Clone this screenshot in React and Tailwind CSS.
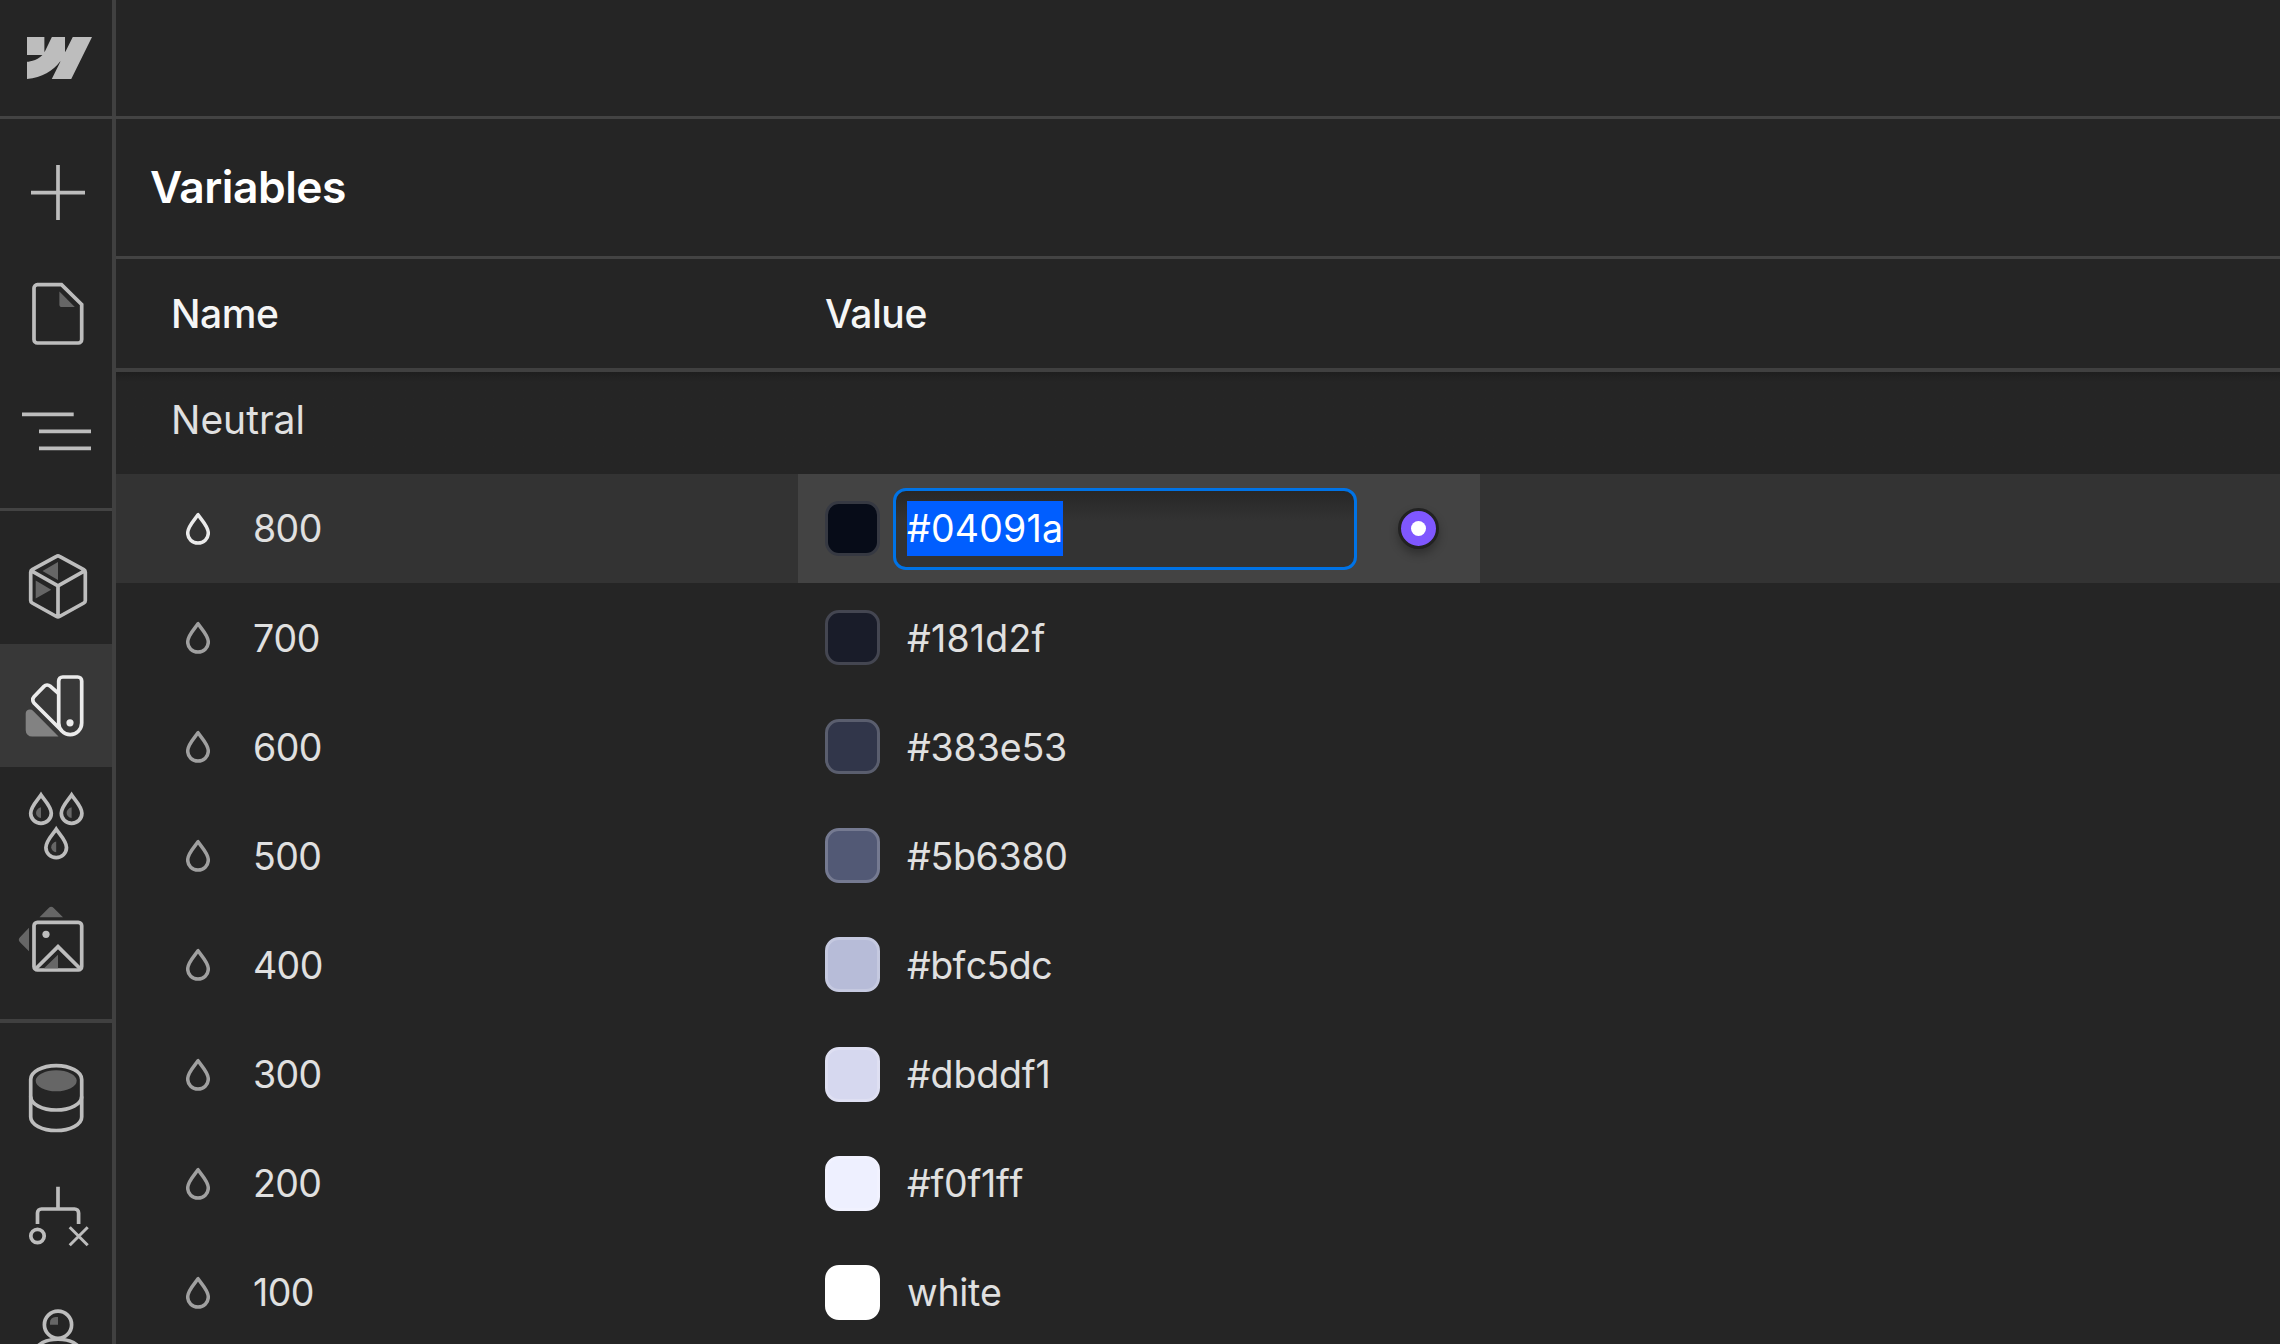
import clsx from "clsx";

const variables = [
  { name: "800", value: "#04091a", fill: "#070c18", border: "#363942", tracking: "tracking-[0.2px]" },
  { name: "700", value: "#181d2f", fill: "#191c29", border: "#444651", tracking: "tracking-[0.2px]" },
  { name: "600", value: "#383e53", fill: "#31364a", border: "#5a5e6e", tracking: "tracking-[-0.15px]" },
  { name: "500", value: "#5b6380", fill: "#525975", border: "#757a91", tracking: "tracking-[-0.3px]" },
  { name: "400", value: "#bfc5dc", fill: "#b7bcd8", border: "#c5c9e0", tracking: "tracking-[-0.6px]" },
  { name: "300", value: "#dbddf1", fill: "#d6d8ef", border: "#dedff2", tracking: "tracking-[-0.15px]" },
  { name: "200", value: "#f0f1ff", fill: "#eef0ff", border: "#f1f2ff", tracking: "tracking-[-0.3px]" },
  { name: "100", value: "white", fill: "#ffffff", border: "#ffffff", tracking: "tracking-[-0.3px]" },
];

const DROP = "M12 2.7C9.2 7.2 1.7 14.2 1.7 21a10.3 10.1 0 0 0 20.6 0C22.3 14.2 14.8 7.2 12 2.7Z";

const DropIcon = ({ className }) => (
  <svg viewBox="0 0 24 33" className={clsx("w-6 h-[33px]", className)} fill="none">
    <path d={DROP} stroke="currentColor" strokeWidth="3.5" strokeLinejoin="round" />
  </svg>
);

const Logo = () => (
  <svg viewBox="0 4.515 24 14.97" preserveAspectRatio="none" className="w-[65px] h-[42px]">
    <path
      fill="#bdbdbd"
      d="m24 4.515-7.658 14.97H9.149l3.205-6.204h-.144C9.566 16.713 5.621 18.973 0 19.485v-6.118s3.596-.213 5.71-2.435H0V4.515h6.417v5.278l.144-.001 2.622-5.277h4.854v5.244h.144l2.72-5.244H24Z"
    />
  </svg>
);

// Sidebar icons, drawn on a 112x123 button
const AddIcon = () => <path d="M58 36v55M31 63.7h54" />;

const PagesIcon = () => (
  <>
    <path d="M37.4 32.7H61.5L81.7 52.5V87.6a3.4 3.4 0 0 1-3.4 3.4H37.4a3.4 3.4 0 0 1-3.4-3.4V36.1a3.4 3.4 0 0 1 3.4-3.4Z" />
    <path d="M59.4 39.5 74.8 55H62a2.6 2.6 0 0 1-2.6-2.6Z" fill="#666" stroke="none" />
  </>
);

const NavigatorIcon = () => <path d="M22 39.3h51.7M39 56.3h52M39 73.3h52" />;

const ComponentsIcon = () => (
  <>
    <path
      d="M56.5 35.3a3 3 0 0 1 3 0L83.8 48.6a3 3 0 0 1 1.5 2.6V79.4a3 3 0 0 1-1.5 2.6L59.5 95.5a3 3 0 0 1-3 0L32.2 82a3 3 0 0 1-1.5-2.6V51.2a3 3 0 0 1 1.5-2.6ZM31.5 49.8 58 64.8 84.5 49.8M58 64.8V96"
      strokeLinejoin="round"
    />
    <path d="M58 41v18L42.5 50ZM35.7 59.5v18L51.2 68.7Z" fill="#666" stroke="none" />
  </>
);

const StylesIcon = () => (
  <>
    <path d="M58.7 37a4 4 0 0 1 4-4h15a4 4 0 0 1 4 4V79.1a11.5 11.5 0 0 1-23 0Z" />
    <path d="M58.7 49.6 50.2 42.2a4.6 4.6 0 0 0-6.2.2L34 52.8a4.6 4.6 0 0 0 0 6.2L62 87" />
    <circle cx="70" cy="78.8" r="3.6" fill="currentColor" stroke="none" />
    <path d="M30 65.5a4 4 0 0 1 3 1.2L58.5 92.5H32a6.3 6.3 0 0 1-6.3-6.3V69.5a4 4 0 0 1 4.3-4Z" fill="#828282" stroke="none" />
  </>
);

const SelectorsIcon = () => (
  <>
    {["translate(29 25.3)", "translate(59.6 25.3)", "translate(44.2 59.6)"].map((pos) => (
      <g key={pos} transform={pos}>
        <path d={DROP} />
        <path d="M12 15v10.7C9 25.2 7 23 7 20.6S9 15.6 12 15Z" fill="#666" stroke="none" />
      </g>
    ))}
  </>
);

const AssetsIcon = () => (
  <>
    <rect x="34" y="32.4" width="47.7" height="47.6" rx="3.4" />
    <path d="M35.5 79 58 56.7 80.5 79" />
    <circle cx="46" cy="44.3" r="3.6" fill="currentColor" stroke="none" />
    <path
      d="M58 64.7v13.6H44ZM39.5 27.3 48.7 18a3.6 3.6 0 0 1 5 0L63 27.3ZM29 37.7V61.3L20 52.2a3.6 3.6 0 0 1 0-5Z"
      fill="#666"
      stroke="none"
    />
  </>
);

const CmsIcon = () => (
  <>
    <path d="M30.7 46.5a25.5 13.8 0 0 1 51 0V84a25.5 13.5 0 0 1-51 0Z" />
    <path d="M30.7 63.5a25.5 13.5 0 0 0 51 0" />
    <ellipse cx="56.2" cy="47.8" rx="20.5" ry="10.5" fill="#666" stroke="none" />
  </>
);

const LogicIcon = () => (
  <>
    <path d="M58 30.7V53M37.5 68V57a4 4 0 0 1 4-4H74.6a4 4 0 0 1 4 4V68" />
    <circle cx="37.5" cy="80" r="6.7" />
    <path d="M69.7 71.2l18 18M87.7 71.2l-18 18" strokeWidth="3" />
  </>
);

const UsersIcon = () => (
  <>
    <circle cx="58" cy="45.7" r="13.6" />
    <path d="M58 38v7.7H50V43.5A5.5 5.5 0 0 1 55.5 38Z" fill="#666" stroke="none" />
    <path d="M38 67C46 58 70 58 78 67" />
  </>
);

const sidebarGroups = [
  [
    { id: "add", icon: AddIcon },
    { id: "pages", icon: PagesIcon },
    { id: "navigator", icon: NavigatorIcon },
  ],
  [
    { id: "components", icon: ComponentsIcon },
    { id: "variables", icon: StylesIcon, active: true },
    { id: "selectors", icon: SelectorsIcon },
    { id: "assets", icon: AssetsIcon },
  ],
  [
    { id: "cms", icon: CmsIcon },
    { id: "logic", icon: LogicIcon },
    { id: "users", icon: UsersIcon },
  ],
];

const SidebarButton = ({ icon: Icon, active }) => (
  <button
    className={clsx(
      "block w-full h-[123px] shrink-0",
      active ? "bg-[#383838] text-[#ebebeb]" : "text-[#bdbdbd]"
    )}
  >
    <svg viewBox="0 0 112 123" className="w-28 h-[123px]" fill="none" stroke="currentColor" strokeWidth="3.7">
      <Icon />
    </svg>
  </button>
);

const Swatch = ({ fill, border }) => (
  <span
    className="w-[55px] h-[55px] shrink-0 rounded-[14px] border-[3px]"
    style={{ backgroundColor: fill, borderColor: border }}
  />
);

const VariableRow = ({ name, value, fill, border, tracking, editing }) => (
  <div
    className={clsx(
      "flex h-[109.1px] shrink-0 text-[37.5px] [font-kerning:none]",
      editing && "bg-[#333333]"
    )}
  >
    <div className="flex w-[682px] items-center pl-[70px]">
      <DropIcon className={editing ? "text-[#ebebeb]" : "text-[#a0a0a0]"} />
      <span className="ml-[43px] pt-[2px] tracking-[-0.6px] text-[#e0e0e0]">{name}</span>
    </div>
    <div className={clsx("flex w-[682px] items-center pl-[27px]", editing && "bg-[#434343]")}>
      <Swatch fill={fill} border={border} />
      {editing ? (
        <>
          <div className="ml-[13px] flex h-[82px] w-[464px] items-center rounded-[13px] border-[3px] border-[#0073e6] bg-gradient-to-b from-[#272727] to-[#333333] to-[30px] pl-[11px]">
            <span className={clsx("flex h-[55px] items-center bg-[#005eff] pt-[2px] text-white", tracking)}>
              {value}
            </span>
          </div>
          <span className="ml-[41px] flex size-[41px] items-center justify-center rounded-full border-[3px] border-[#222222] bg-[#7f57ff] shadow-[0_5px_10px_rgba(0,0,0,0.3)]">
            <span className="size-[15px] rounded-full bg-white" />
          </span>
        </>
      ) : (
        <span className={clsx("ml-[27px] pt-[2px] text-[#e0e0e0]", tracking)}>{value}</span>
      )}
    </div>
  </div>
);

export default function App() {
  return (
    <div className="flex h-[1344px] w-[2280px] flex-col overflow-hidden bg-[#252525] font-['Inter',sans-serif]">
      {/* Top bar */}
      <header className="flex h-[119px] shrink-0 border-b-[3px] border-[#434343]">
        <div className="w-[116px] border-r-4 border-[#404040] pl-[27px] pt-[37px]">
          <Logo />
        </div>
      </header>

      <div className="flex min-h-0 flex-1">
        {/* Sidebar */}
        <aside className="flex w-[116px] shrink-0 flex-col overflow-hidden border-r-4 border-[#404040]">
          {sidebarGroups.map((group, i) => (
            <div
              key={i}
              className={clsx(
                "shrink-0 pt-[10px]",
                i === 0 && "h-[392px] border-b-[3px] border-[#434343]",
                i === 1 && "h-[512px] border-b-4 border-[#404040]"
              )}
            >
              {group.map((item) => (
                <SidebarButton key={item.id} icon={item.icon} active={item.active} />
              ))}
            </div>
          ))}
        </aside>

        {/* Variables panel */}
        <main className="flex flex-1 flex-col overflow-hidden">
          <div className="flex h-[140px] shrink-0 items-center border-b-[3px] border-[#434343] pl-[34px]">
            <h1 className="text-[44.4px] font-semibold tracking-[-0.5px] text-white">Variables</h1>
          </div>
          <div className="flex h-[113px] shrink-0 items-center border-b-4 border-[#404040] pt-px text-[39px] font-medium tracking-[-0.4px] text-[#f5f5f5]">
            <span className="w-[682px] pl-[55px]">Name</span>
            <span className="w-[682px] pl-[27px]">Value</span>
          </div>
          <div className="flex h-[102px] shrink-0 items-center bg-gradient-to-b from-[#1e1e1e] to-[#252525] to-[10px] pb-[6px] pl-[55px] text-[39px] text-[#e0e0e0]">
            Neutral
          </div>
          {variables.map((variable, i) => (
            <VariableRow key={variable.name} {...variable} editing={i === 0} />
          ))}
        </main>
      </div>
    </div>
  );
}
